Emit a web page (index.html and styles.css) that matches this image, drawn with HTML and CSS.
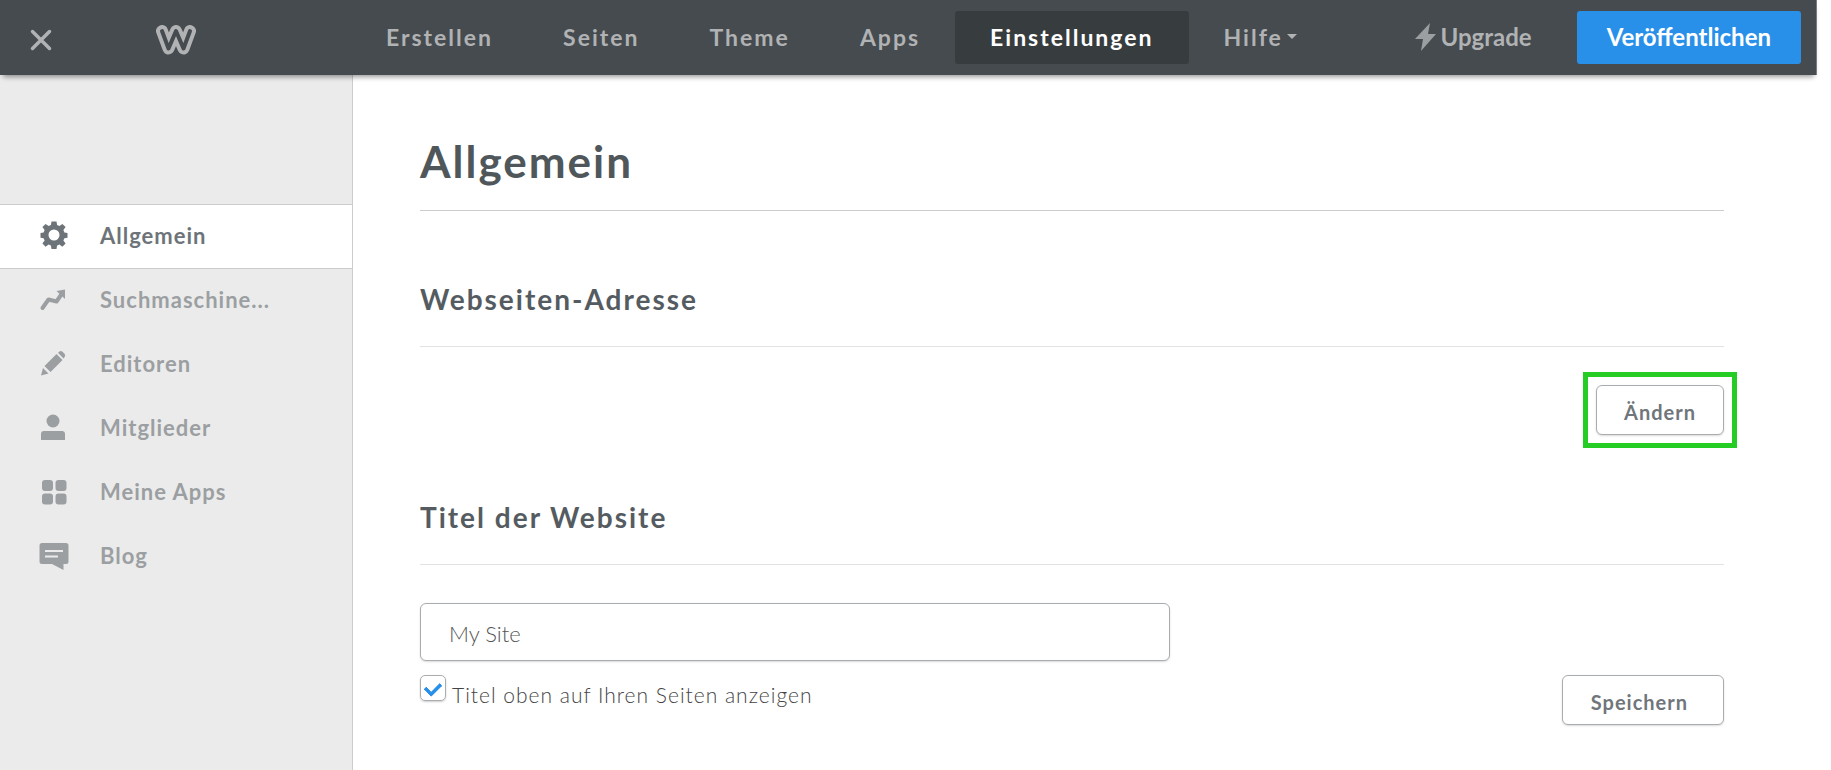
FILE: index.html
```html
<!DOCTYPE html>
<html lang="de">
<head>
    <meta charset="UTF-8">
    <meta name="viewport" content="width=device-width, initial-scale=1.0">
    <title>Einstellungen - Allgemein</title>
    <link rel="stylesheet" href="styles.css">
</head>
<body>
    <header class="topbar">
        <div class="brand">
            <button class="close" type="button" aria-label="Schließen">
                <svg width="22" height="22" viewBox="0 0 22 22"><path d="M2.500 2.500l17 17M19.500 2.500l-17 17" fill="none" stroke="currentColor" stroke-width="3.500" stroke-linecap="round"/></svg>
            </button>
            <a class="logo" href="#" aria-label="Startseite">
                <svg width="40" height="30" viewBox="0 0 40 30" fill="none" stroke-linecap="round" stroke-linejoin="round">
                    <path d="M6 6L12.500 23.500 20 6 27.500 23.500 34 6" stroke="#b0b2b4" stroke-width="12"/>
                    <path d="M6 6L12.500 23.500 20 6 27.500 23.500 34 6" stroke="#464b4f" stroke-width="4"/>
                </svg>
            </a>
        </div>
        <nav class="tabs">
            <a href="#">Erstellen</a>
            <a href="#">Seiten</a>
            <a href="#">Theme</a>
            <a href="#">Apps</a>
            <a href="#" class="active">Einstellungen</a>
            <a href="#">Hilfe<span class="caret"></span></a>
        </nav>
        <div class="actions">
            <a class="upgrade" href="#">
                <svg width="21" height="28" viewBox="0 0 21 28"><path d="M15 0L0 16h8L6 28 21 11h-8z" fill="#9b9fa2"/></svg>
                Upgrade
            </a>
            <button class="publish" type="button">Veröffentlichen</button>
        </div>
    </header>

    <div class="page">
        <aside class="sidebar">
            <a href="#" class="active">
                <svg width="30" height="30" viewBox="0 0 30 30" fill="currentColor"><path fill-rule="evenodd" d="M12.500 1.500h5l.6 3.600 2.300 1 3-2.200 3.200 3.200-2.200 3 1 2.300 3.100.5v4.800l-3.100.5-1 2.300 2.200 3-3.200 3.200-3-2.200-2.300 1-.6 3.500h-5l-.6-3.500-2.300-1-3 2.200-3.200-3.200 2.200-3-1-2.300-3.100-.5v-4.800l3.100-.5 1-2.300-2.200-3 3.200-3.200 3 2.200 2.300-1zM15 9.500a5.500 5.500 0 1 0 0 11 5.500 5.500 0 0 0 0-11z"/></svg>
                <span>Allgemein</span>
            </a>
            <a href="#" title="Suchmaschinenoptimierung">
                <svg width="30" height="30" viewBox="0 0 30 30"><path d="M3.500 23l6-8.500 8 2 5.500-8" fill="none" stroke="currentColor" stroke-width="4" stroke-linecap="round" stroke-linejoin="round"/><path d="M17.500 6L26 4.500V14z" fill="currentColor"/></svg>
                <span>Suchmaschine...</span>
            </a>
            <a href="#">
                <svg width="30" height="30" viewBox="0 0 30 30" fill="currentColor"><path d="M2 26.500l2-7.500 5.500 5.500zM5.500 17L17.500 5l6 6-12 12zM19 3.800l1.500-1.300q1.500-1 3 .3l2 2q1.300 1.500.3 3L24.500 9.500z"/></svg>
                <span>Editoren</span>
            </a>
            <a href="#">
                <svg width="30" height="30" viewBox="0 0 30 30" fill="currentColor"><circle cx="14" cy="8" r="6.500"/><path d="M2 27v-6q0-3 3-3h18q3 0 3 3v6z"/></svg>
                <span>Mitglieder</span>
            </a>
            <a href="#">
                <svg width="30" height="30" viewBox="0 0 30 30" fill="currentColor"><rect x="3" y="3" width="11" height="11" rx="3"/><rect x="16.500" y="3" width="11" height="11" rx="3"/><rect x="3" y="16.500" width="11" height="11" rx="3"/><rect x="16.500" y="16.500" width="11" height="11" rx="3"/></svg>
                <span>Meine Apps</span>
            </a>
            <a href="#">
                <svg width="30" height="30" viewBox="0 0 30 30"><path d="M3 2h24q2.500 0 2.500 2.500v16q0 2.500-2.500 2.500h-2.500v6L13 23H3Q.5 23 .5 20.500v-16Q.5 2 3 2z" fill="currentColor"/><path d="M6 10h18M6 15.500h13" stroke="#ebebeb" stroke-width="2"/></svg>
                <span>Blog</span>
            </a>
        </aside>

        <main class="content">
            <h1>Allgemein</h1>

            <section>
                <h2>Webseiten-Adresse</h2>
                <div class="row">
                    <div class="highlight">
                        <button class="btn" type="button">Ändern</button>
                    </div>
                </div>
            </section>

            <section>
                <h2><label for="siteTitle">Titel der Website</label></h2>
                <form class="title-form">
                    <input type="text" id="siteTitle" value="My Site">
                    <div class="title-row">
                        <label class="check" for="showTitle">
                            <input type="checkbox" id="showTitle" checked>
                            <span>Titel oben auf Ihren Seiten anzeigen</span>
                        </label>
                        <button class="btn save" type="button">Speichern</button>
                    </div>
                </form>
            </section>
        </main>
    </div>
</body>
</html>
```
FILE: styles.css
```css
* { margin: 0; padding: 0; box-sizing: border-box; }
body { display: flex; flex-direction: column; min-height: 100vh; background: #fff; color: #555c61;
       font-family: Lato, "Open Sans", sans-serif; font-size: 22px; letter-spacing: 1px; }
a { color: inherit; text-decoration: none; }
button, input { font-family: inherit; letter-spacing: inherit; }
button { cursor: pointer; }
svg { display: block; flex: none; }

/* top bar */
.topbar { position: relative; display: flex; align-items: center; height: 75px; margin-right: 14px;
          padding-right: 15px; background: #464b4f; color: #b0b2b4; font-weight: bold;
          border-right: 1px solid #7b7e81; box-shadow: 0 5px 5px -3px rgba(0, 0, 0, 0.4); }
.brand { display: flex; align-items: center; gap: 104px; width: 351px; padding: 5px 0 0 30px; }
.close { border: none; background: none; color: inherit; }
.tabs { display: flex; letter-spacing: 2px; }
.tabs a { display: flex; align-items: center; height: 53px; padding: 0 35px 2px; font-size: 23px; border-radius: 3px; }
.tabs .active { background: #373c3f; color: #fff; }
.caret { margin-left: 4px; border: 5px solid transparent; border-top-color: currentColor; border-bottom: none; }
.actions { display: flex; align-items: center; gap: 45px; margin-left: auto; font-size: 24px; letter-spacing: 0; }
.upgrade { display: flex; align-items: center; gap: 4px; padding-bottom: 2px; }
.publish { height: 53px; padding: 0 30px 2px; border: none; border-radius: 3px; background: #2990ea; color: #fff;
           font-size: 24px; font-weight: bold; }

/* layout */
.page { display: flex; flex: 1; }
.sidebar { flex: none; width: 353px; padding-top: 129px; background: #ebebeb; border-right: 1px solid #ccc; }
.sidebar a { display: flex; align-items: center; gap: 31px; height: 64px; padding: 0 39px 3px;
             color: #9b9fa2; font-weight: bold; white-space: nowrap; }
.sidebar .active { height: 65px; background: #fff; border: solid #ccc; border-width: 1px 0; color: #6d7479; }
.content { flex: 1; padding: 59px 107px 40px 67px; }

h1 { padding-bottom: 21px; border-bottom: 1px solid #ccc; color: #50575b; font-size: 44px; line-height: 55px;
     letter-spacing: 2px; }
h2 { padding-bottom: 30px; border-bottom: 1px solid #e2e2e2; font-size: 28px; line-height: 34px; letter-spacing: 2px; }
section { padding-top: 71px; }
section + section { padding-top: 65px; }
.row { display: flex; justify-content: flex-end; padding-top: 38px; }

/* form controls */
.btn { display: block; height: 50px; padding: 4px 27px 0; border: 1px solid #aaadb0; border-radius: 6px;
       background: #fff; color: #70767b; font-size: 20px; font-weight: bold;
       box-shadow: 0 1px 2px rgba(0, 0, 0, 0.15); }
.save { padding: 4px 35px 0 28px; }
.highlight { outline: 5px solid #24cc24; outline-offset: 8px; }
.title-form { padding-top: 38px; }
input[type="text"] { display: block; width: 100%; max-width: 750px; height: 58px; padding: 2px 28px 0;
                     border: 1px solid #aaadb0; border-radius: 6px; color: #555; font-size: 22px;
                     font-weight: 300; letter-spacing: 0; box-shadow: 0 1px 2px rgba(0, 0, 0, 0.15); }
.title-row { display: flex; justify-content: space-between; align-items: flex-start; padding-top: 14px; }
.check { display: flex; gap: 6px; color: #444; font-size: 21px; font-weight: 300; }
.check span { padding-top: 8px; line-height: 24px; }
.check input { appearance: none; width: 26px; height: 26px; border: 1px solid #aaadb0; border-radius: 5px;
               box-shadow: 0 1px 2px rgba(0, 0, 0, 0.2); }
.check input:checked::before { content: ""; display: block; width: 12px; height: 7px; margin: 6px auto 0;
                               border: solid #2990ea; border-width: 0 0 4px 4px; border-radius: 1px;
                               transform: rotate(-45deg); }
```
